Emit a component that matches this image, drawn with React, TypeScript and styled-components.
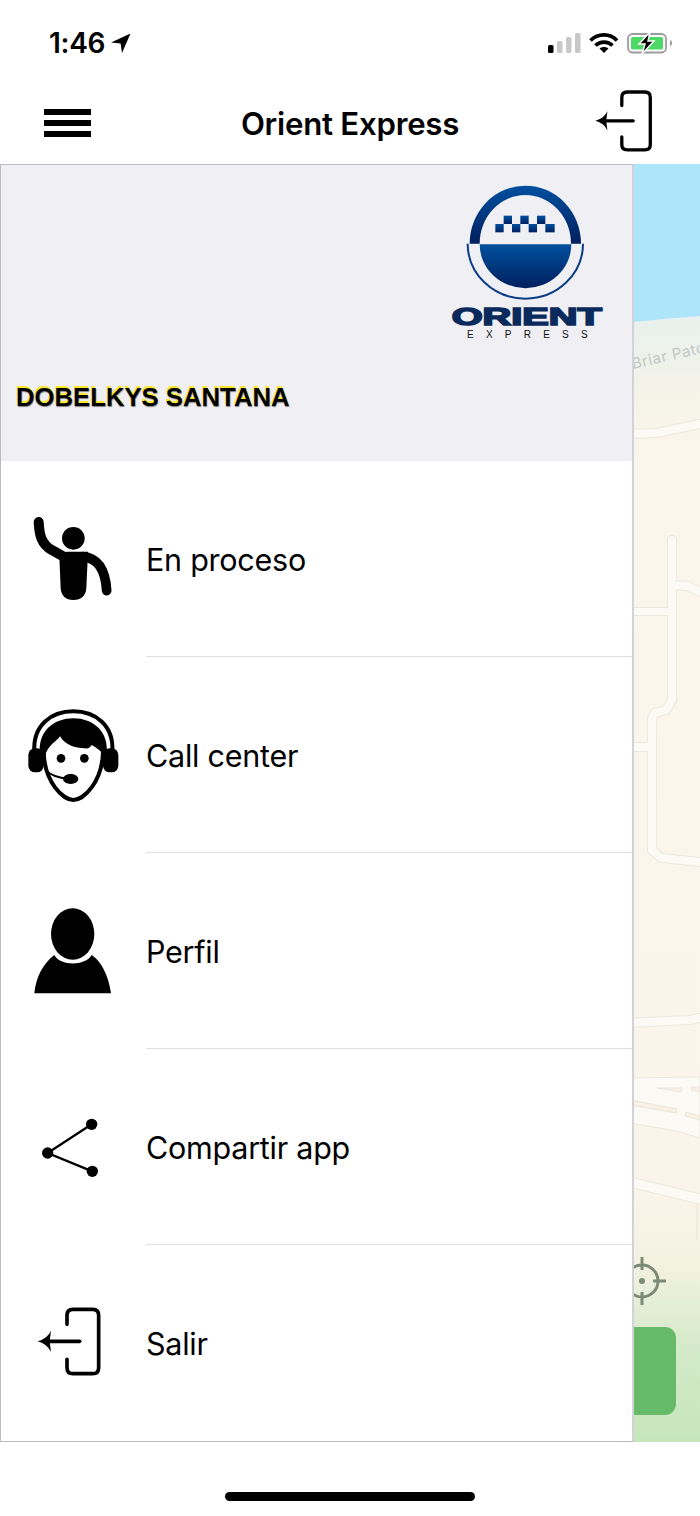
import React from "react";
import styled, { createGlobalStyle } from "styled-components";

const Global = createGlobalStyle`
  html, body { margin: 0; padding: 0; background: #fff; }
  * { box-sizing: border-box; }
`;

const Page = styled.div`
  width: 700px;
  height: 1516px;
  display: flex;
  flex-direction: column;
  background: #fff;
  overflow: hidden;
  font-family: Inter, "Liberation Sans", sans-serif;
  color: #000;
`;

const StatusBar = styled.div`
  height: 82px;
  flex: none;
  display: flex;
  justify-content: space-between;
  align-items: flex-start;
  padding: 26px 28px 0 49px;
`;
const TimeGroup = styled.div`
  display: flex;
  align-items: center;
  gap: 6px;
`;
const Clock = styled.span`
  font-size: 28px;
  line-height: 34px;
  font-weight: 600;
  letter-spacing: -0.3px;
`;
const StatusIcons = styled.div`
  display: flex;
  align-items: center;
  padding-top: 6px;
`;

const NavBar = styled.div`
  height: 82px;
  flex: none;
  display: grid;
  grid-template-columns: 1fr auto 1fr;
  align-items: center;
  padding: 0 47px 0 44px;
`;
const Burger = styled.div`
  width: 47px;
  display: flex;
  flex-direction: column;
  gap: 5.5px;
`;
const BurgerBar = styled.span`
  display: block;
  height: 5.5px;
  background: #000;
`;
const Title = styled.div`
  font-size: 31.2px;
  font-weight: 600;
  letter-spacing: -0.25px;
  line-height: 40px;
  padding-top: 1px;
  transform: translateX(1.5px);
`;
const NavAction = styled.div`
  justify-self: end;
  display: flex;
`;

const MapArea = styled.div`
  position: relative;
  height: 1278px;
  flex: none;
  overflow: hidden;
`;
const MapDrawing = styled.svg`
  position: absolute;
  top: 0;
  right: 0;
  width: 67px;
  height: 100%;
`;
const MapButton = styled.div`
  position: absolute;
  right: 24px;
  top: 1163px;
  width: 120px;
  height: 88px;
  border-radius: 11px;
  background: #66ba6a;
`;

const Drawer = styled.div`
  position: relative;
  z-index: 1;
  width: 634px;
  height: 100%;
  background: #fff;
  border: 1px solid #bcbcc0;
  border-right: 2px solid #d2d2d9;
  display: flex;
  flex-direction: column;
`;
const DrawerHeader = styled.div`
  height: 296px;
  flex: none;
  background: #efeff4;
  display: flex;
  flex-direction: column;
  padding: 18px 25px 0 15px;
`;
const LogoSvg = styled.svg`
  align-self: flex-end;
  width: 160px;
  height: 157px;
  flex: none;
`;
const UserName = styled.div`
  margin-top: 42px;
  font-family: "Liberation Sans", Arial, sans-serif;
  font-weight: 700;
  font-size: 25.7px;
  line-height: 30px;
  color: #000;
  text-shadow: -0.5px -2px 0 #fbe82a, 0.5px 1px 1px #7f7f7f;
`;

const Row = styled.div`
  height: 196px;
  flex: none;
  display: flex;
  align-items: stretch;
`;
const IconSlot = styled.div<{ $left: number }>`
  width: 145px;
  flex: none;
  display: flex;
  align-items: center;
  padding-left: ${(p) => p.$left}px;
`;
const RowLabel = styled.div<{ $last?: boolean }>`
  flex: 1;
  display: flex;
  align-items: center;
  padding-top: 1px;
  font-size: 30.5px;
  font-weight: 400;
  letter-spacing: -0.25px;
  border-bottom: 1px solid ${(p) => (p.$last ? "transparent" : "#e0e0e2")};
`;

const Footer = styled.div`
  flex: 1;
  display: flex;
  justify-content: center;
  padding-top: 50px;
`;
const HomeBar = styled.div`
  width: 250px;
  height: 9px;
  border-radius: 5px;
  background: #000;
`;

const Glyph = ({ y, children }: { y: number; children: React.ReactNode }) => (
  <svg width="130" height="120" viewBox={`0 ${y} 390 360`} aria-hidden="true">
    {children}
  </svg>
);

const WaveIcon = () => (
  <Glyph y={-3}>
    <circle cx="190" cy="115" r="34" fill="#000" />
    <path d="M86 66C88 105 94 132 125 150L165 172" fill="none" stroke="#000" strokeWidth="30" strokeLinecap="round" />
    <path d="M218 170C262 174 286 206 290 272" fill="none" stroke="#000" strokeWidth="29" strokeLinecap="round" />
    <path d="M148 170L152 265Q155 300 190 300Q226 300 229 265L234 155L170 155Z" fill="#000" />
  </Glyph>
);

const AgentIcon = () => (
  <Glyph y={0}>
    <path d="M73 170C68 90 125 49 190 49S312 90 307 170" fill="none" stroke="#000" strokeWidth="12" />
    <path d="M90 180C82 110 130 70 190 70S298 110 290 180L282 182C278 172 262 160 245 150C238 160 232 162 225 160C195 160 165 150 150 124C140 140 112 150 105 185Z" fill="#000" />
    <path d="M101 170C103 262 160 315 190 315C220 315 277 262 279 170" fill="none" stroke="#000" strokeWidth="12" />
    <circle cx="153" cy="190" r="13" fill="#000" />
    <circle cx="223" cy="190" r="13" fill="#000" />
    <rect x="55" y="160" width="46" height="72" rx="20" fill="#000" />
    <rect x="279" y="160" width="46" height="72" rx="20" fill="#000" />
    <path d="M106 226Q130 248 175 251" fill="none" stroke="#000" strokeWidth="6" />
    <ellipse cx="182" cy="252" rx="23" ry="15" fill="#000" />
  </Glyph>
);

const PersonIcon = () => (
  <Glyph y={-12}>
    <ellipse cx="188" cy="117" rx="65" ry="77" fill="#000" />
    <path d="M73 295C78 245 100 205 133 180C150 214 226 214 245 180C272 197 296 240 303 295Z" fill="#000" />
  </Glyph>
);

const ShareIcon = () => (
  <Glyph y={-39}>
    <path d="M245 73L113 159L247 214" fill="none" stroke="#000" strokeWidth="7" />
    <circle cx="245" cy="73" r="17" fill="#000" />
    <circle cx="113" cy="159" r="17" fill="#000" />
    <circle cx="247" cy="214" r="17" fill="#000" />
  </Glyph>
);

const ExitIcon = ({ scale }: { scale: number }) => (
  <svg width={200 * scale} height={225 * scale} viewBox="80 46 200 225" aria-hidden="true">
    <path
      d="M176 101V74Q176 56 194 56H253Q271 56 271 74V231Q271 249 253 249H194Q176 249 176 231V206"
      fill="none"
      stroke="#000"
      strokeWidth="11"
      strokeLinecap="round"
    />
    <path d="M214 152H105" fill="none" stroke="#000" strokeWidth="11" strokeLinecap="round" />
    <path d="M128 120Q118 143 88 152Q118 161 128 184L124 152Z" fill="#000" />
  </svg>
);

const Logo = () => (
  <LogoSvg viewBox="50 40 480 471" aria-label="Orient Express logo">
    <defs>
      <linearGradient id="logoBlue" x1="0" y1="0" x2="0" y2="1">
        <stop offset="0" stopColor="#00509f" />
        <stop offset="1" stopColor="#001f5e" />
      </linearGradient>
    </defs>
    <path d="M118 222A167 174 0 0 1 452 222H422A137 146 0 0 0 148 222Z" fill="url(#logoBlue)" />
    <path d="M148 224H423A137 131 0 0 1 148 224Z" fill="url(#logoBlue)" />
    <path d="M112 222A173 165 0 0 0 458 222" fill="none" stroke="#0a3d86" strokeWidth="6" />
    <g fill="url(#logoBlue)">
      <rect x="220" y="138" width="25" height="25" />
      <rect x="270" y="138" width="25" height="25" />
      <rect x="320" y="138" width="25" height="25" />
      <rect x="195" y="163" width="25" height="25" />
      <rect x="245" y="163" width="25" height="25" />
      <rect x="295" y="163" width="25" height="25" />
      <rect x="345" y="163" width="28" height="25" />
    </g>
    <text
      x="64"
      y="466"
      textLength="450"
      lengthAdjust="spacingAndGlyphs"
      fontFamily="'Liberation Sans', sans-serif"
      fontWeight="700"
      fontSize="74"
      fill="#0a2a5c"
      stroke="#0a2a5c"
      strokeWidth="5"
    >
      ORIENT
    </text>
    <text
      x="110"
      y="504"
      textLength="362"
      fontFamily="'Liberation Sans', sans-serif"
      fontSize="30"
      fill="#111"
    >
      EXPRESS
    </text>
  </LogoSvg>
);

const roads = [
  { d: "M625 434L657 433L700 424", w: 10 },
  { d: "M672 540V700L666 710L655 713L652 719V850L661 858L700 862", w: 10 },
  { d: "M625 611.5H672", w: 9 },
  { d: "M672 585L688 586L700 592", w: 10 },
  { d: "M625 747H652", w: 10 },
  { d: "M625 1023L690 1020L700 1018", w: 10 },
  { d: "M625 1181L700 1199", w: 11 },
];

const MapBackdrop = () => (
  <MapDrawing viewBox="633 164 67 1278" preserveAspectRatio="none" aria-hidden="true">
    <defs>
      <linearGradient id="land" x1="0" y1="0" x2="0" y2="1">
        <stop offset="0.12" stopColor="#e8f1ee" />
        <stop offset="0.18" stopColor="#f5f3e8" />
        <stop offset="0.23" stopColor="#fbf6ec" />
        <stop offset="0.8" stopColor="#faf5ea" />
        <stop offset="0.86" stopColor="#f3f2e1" />
        <stop offset="0.93" stopColor="#d3e9c8" />
        <stop offset="1" stopColor="#c5e6bc" />
      </linearGradient>
    </defs>
    <rect x="633" y="164" width="67" height="1278" fill="url(#land)" />
    <path d="M633 164H700V316Q670 318 633 322Z" fill="#aee5fb" />
    <text
      x="633"
      y="369"
      transform="rotate(-13 633 369)"
      fontFamily="Inter, sans-serif"
      fontSize="15"
      letterSpacing="0.6"
      fill="#c3c7c5"
    >
      Briar Patch
    </text>
    <path d="M630 1078L700 1077V1138L677 1131L630 1123Z" fill="#fcfaf5" stroke="#eee8dd" strokeWidth="1" />
    <path d="M657 1088H682L681 1092Z" fill="#f7f1e6" stroke="#ebe5d9" />
    <path d="M692 1087H700V1092L691 1090Z" fill="#f7f1e6" stroke="#ebe5d9" />
    <path d="M630 1100L677 1109L676 1113L630 1105Z" fill="#f7f1e6" stroke="#ebe5d9" />
    <path d="M686 1112L700 1116V1120L685 1116Z" fill="#f7f1e6" stroke="#ebe5d9" />
    {roads.map((r) => (
      <path key={"c" + r.d} d={r.d} fill="none" stroke="#eee8dd" strokeWidth={r.w} strokeLinecap="round" />
    ))}
    {roads.map((r) => (
      <path key={"f" + r.d} d={r.d} fill="none" stroke="#fcfaf5" strokeWidth={r.w - 2} strokeLinecap="round" />
    ))}
    <path d="M697 1204V1240" fill="none" stroke="#e6e3d2" />
    <g stroke="#7d8a77" fill="none" strokeWidth="3">
      <circle cx="642" cy="1281" r="16" />
      <path d="M642 1257V1270M642 1292V1305M653 1281H666M618 1281H631" />
    </g>
    <circle cx="642" cy="1281" r="3" fill="#7d8a77" />
  </MapDrawing>
);

const items = [
  { label: "En proceso", icon: <WaveIcon />, left: 9 },
  { label: "Call center", icon: <AgentIcon />, left: 9 },
  { label: "Perfil", icon: <PersonIcon />, left: 9 },
  { label: "Compartir app", icon: <ShareIcon />, left: 9 },
  { label: "Salir", icon: <ExitIcon scale={1 / 3} />, left: 34 },
];

export default function App() {
  return (
    <Page>
      <Global />
      <StatusBar>
        <TimeGroup>
          <Clock>1:46</Clock>
          <svg width="20" height="20" viewBox="0 0 20 20" aria-hidden="true">
            <path d="M0 9.5L19.5 0.5L11 20L9.6 10.6Z" fill="#000" />
          </svg>
        </TimeGroup>
        <StatusIcons>
          <svg width="125" height="22" viewBox="0 0 125 22" aria-hidden="true">
            <rect x="1" y="13" width="5.5" height="8" rx="1.5" fill="#000" />
            <rect x="10" y="9" width="5.5" height="12" rx="1.5" fill="#c8c8c8" />
            <rect x="19" y="5" width="5.5" height="16" rx="1.5" fill="#c8c8c8" />
            <rect x="28" y="1" width="5.5" height="20" rx="1.5" fill="#c8c8c8" />
            <g fill="none" stroke="#000" strokeWidth="3.6">
              <path d="M43.5 8.5C51 1 63 1 70 8.5" />
              <path d="M48.5 13.5C53 9 61 9 65.5 13.5" />
            </g>
            <path d="M52.5 16.5C55 14.5 59 14.5 61.5 16.5L57 21Z" fill="#000" />
            <rect x="81" y="2" width="38" height="18.5" rx="4.5" fill="none" stroke="#9c9c9c" strokeWidth="1.8" />
            <rect x="84" y="5" width="32" height="12.5" rx="1.5" fill="#4cd964" />
            <path d="M123 8C124.5 8.5 125 9.5 125 11S124.5 13.5 123 14Z" fill="#9c9c9c" />
            <path d="M103 0L92 12H98L95 22L107 9H101Z" fill="#000" stroke="#fff" strokeWidth="1.5" />
          </svg>
        </StatusIcons>
      </StatusBar>

      <NavBar>
        <Burger>
          <BurgerBar />
          <BurgerBar />
          <BurgerBar />
        </Burger>
        <Title>Orient Express</Title>
        <NavAction>
          <ExitIcon scale={0.3} />
        </NavAction>
      </NavBar>

      <MapArea>
        <MapBackdrop />
        <MapButton />
        <Drawer>
          <DrawerHeader>
            <Logo />
            <UserName>DOBELKYS SANTANA</UserName>
          </DrawerHeader>
          {items.map((item, i) => (
            <Row key={item.label}>
              <IconSlot $left={item.left}>{item.icon}</IconSlot>
              <RowLabel $last={i === items.length - 1}>{item.label}</RowLabel>
            </Row>
          ))}
        </Drawer>
      </MapArea>

      <Footer>
        <HomeBar />
      </Footer>
    </Page>
  );
}
